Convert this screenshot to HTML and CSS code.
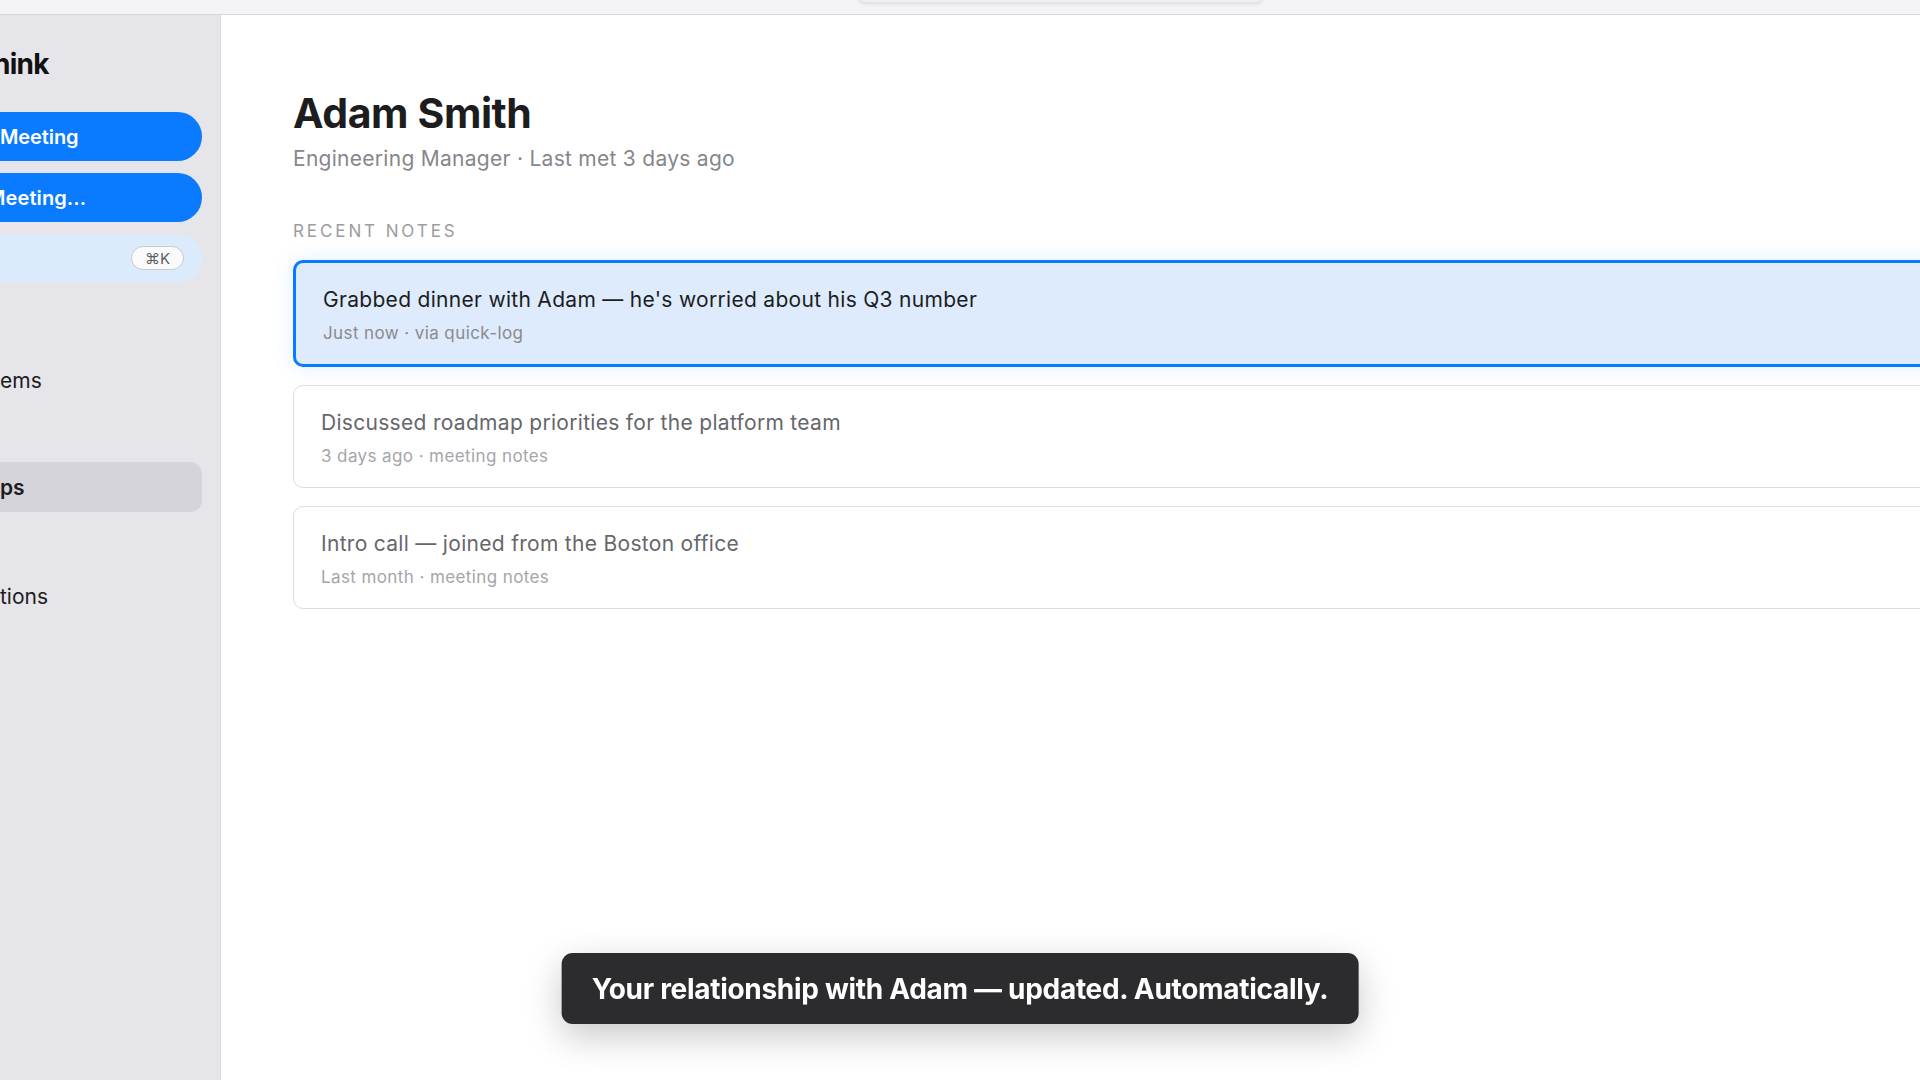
FILE: index.html
```html
<!DOCTYPE html>
<html lang="en">
<head>
<meta charset="utf-8">
<title>Adam Smith</title>
<link rel="stylesheet" href="styles.css">
</head>
<body>
<div class="topbar"><div class="topbar-float"></div></div>
<div class="app">
  <aside class="sidebar">
    <div class="side-inner">
      <div class="brand"><span class="brand-text">hink</span></div>
      <button class="btn-primary"><span class="lbl">Meeting</span></button>
      <button class="btn-primary btn-second"><span class="lbl lbl-cut">Meeting...</span></button>
      <div class="search"><span class="kbd">⌘K</span></div>
      <nav class="nav">
        <div class="nav-item nav-first"><span>ems</span></div>
        <div class="nav-item nav-active"><span>ps</span></div>
        <div class="nav-item nav-third"><span>tions</span></div>
      </nav>
    </div>
  </aside>
  <main class="main">
    <h1 class="name">Adam Smith</h1>
    <p class="subtitle">Engineering Manager · Last met 3 days ago</p>
    <h2 class="section-label">RECENT NOTES</h2>
    <div class="notes">
      <div class="note note-active">
        <div class="note-title">Grabbed dinner with Adam — he's worried about his Q3 number</div>
        <div class="note-meta">Just now · via quick-log</div>
      </div>
      <div class="note">
        <div class="note-title">Discussed roadmap priorities for the platform team</div>
        <div class="note-meta">3 days ago · meeting notes</div>
      </div>
      <div class="note">
        <div class="note-title">Intro call — joined from the Boston office</div>
        <div class="note-meta">Last month · meeting notes</div>
      </div>
    </div>
  </main>
</div>
<div class="toast">Your relationship with Adam — updated. Automatically.</div>
</body>
</html>
```
FILE: styles.css
```css
* { box-sizing: border-box; }
html, body {
  margin: 0;
  padding: 0;
  width: 1920px;
  height: 1080px;
  overflow: hidden;
  background: #ffffff;
  font-family: Inter, "Noto Sans", "Liberation Sans", sans-serif;
  color: #1d1d1f;
}

.topbar {
  position: relative;
  height: 15px;
  background: #f4f4f6;
  border-bottom: 1px solid #d6d6d9;
}
.topbar-float {
  position: absolute;
  left: 858px;
  width: 406px;
  top: -20px;
  height: 22px;
  background: #f0f0f2;
  border-radius: 8px;
  box-shadow: 0 2px 4px rgba(0,0,0,0.10);
}

.app {
  display: flex;
  height: 1065px;
}

.sidebar {
  width: 221px;
  flex: 0 0 221px;
  background: #e6e5ea;
  border-right: 1px solid #dcdce0;
  overflow: hidden;
}
.side-inner {
  margin-left: -60px;
  width: 262px;
  display: flex;
  flex-direction: column;
  padding-top: 29px;
}
.brand {
  padding-left: 60px;
  height: 40px;
  line-height: 40px;
  font-size: 28px;
  font-weight: 700;
  color: #111111;
  letter-spacing: -0.7px;
  white-space: nowrap;
}
.brand-text { margin-left: -7px; }

.btn-primary {
  display: flex;
  align-items: center;
  height: 49px;
  padding: 0 0 0 60px;
  margin-top: 28px;
  border: none;
  border-radius: 25px;
  background: #0a7aff;
  color: #ffffff;
  font-family: inherit;
  font-size: 20px;
  font-weight: 600;
  letter-spacing: -0.1px;
  text-align: left;
  white-space: nowrap;
}
.btn-second { margin-top: 12px; }
.lbl-cut { margin-left: -13px; letter-spacing: 0.1px; }

.search {
  margin-top: 12px;
  height: 48px;
  border-radius: 24px;
  background: #dcebfc;
  display: flex;
  align-items: center;
  justify-content: flex-end;
  padding-right: 18px;
}
.kbd {
  width: 53px;
  height: 24px;
  border-radius: 12px;
  border: 1.5px solid #c9c9ce;
  background: #fafafb;
  color: #5e5e63;
  font-size: 15px;
  display: flex;
  align-items: center;
  justify-content: center;
}

.nav {
  display: flex;
  flex-direction: column;
  margin-top: 73px;
}
.nav-item {
  height: 50px;
  border-radius: 12px;
  padding-left: 60px;
  display: flex;
  align-items: center;
  font-size: 21px;
  color: #1d1d1f;
  white-space: nowrap;
}
.nav-active {
  margin-top: 57px;
  background: #d5d4da;
  font-weight: 600;
}
.nav-third { margin-top: 59px; }

.main {
  flex: 1;
  padding: 74px 0 0 72px;
  min-width: 0;
}
.name {
  margin: 0;
  font-size: 41px;
  line-height: 48px;
  font-weight: 700;
  letter-spacing: -0.4px;
  color: #1d1d1f;
}
.subtitle {
  margin: 9px 0 0;
  font-size: 21px;
  line-height: 26px;
  letter-spacing: 0.28px;
  color: #86868b;
}
.section-label {
  margin: 48px 0 0;
  font-size: 17px;
  line-height: 22px;
  font-weight: 400;
  letter-spacing: 2.9px;
  color: #9c9ca1;
}
.notes {
  margin-top: 18px;
  width: 1800px;
  display: flex;
  flex-direction: column;
  gap: 18px;
}
.note {
  border: 1px solid #dddde0;
  border-radius: 10px;
  background: #ffffff;
  padding: 24px 27px 21px;
}
.note-active {
  border: 3px solid #0a7aff;
  background: #ddebfc;
  box-shadow: 0 0 22px rgba(10,122,255,0.12);
}
.note-title {
  font-size: 21px;
  line-height: 26px;
  letter-spacing: 0.3px;
  color: #66666b;
}
.note-meta {
  margin-top: 10px;
  font-size: 17px;
  line-height: 20px;
  letter-spacing: 0.4px;
  color: #a5a5aa;
}
.note-active .note-title { color: #1d1d1f; }
.note-active .note-meta { color: #8a8a8f; }

.toast {
  position: fixed;
  left: 50%;
  bottom: 56px;
  transform: translateX(-50%);
  height: 71px;
  padding: 0 30px;
  display: flex;
  align-items: center;
  white-space: nowrap;
  background: #2c2c2e;
  color: #ffffff;
  border-radius: 11px;
  font-size: 28px;
  font-weight: 700;
  letter-spacing: -0.3px;
  box-shadow: 0 12px 36px rgba(0,0,0,0.22);
}
```
